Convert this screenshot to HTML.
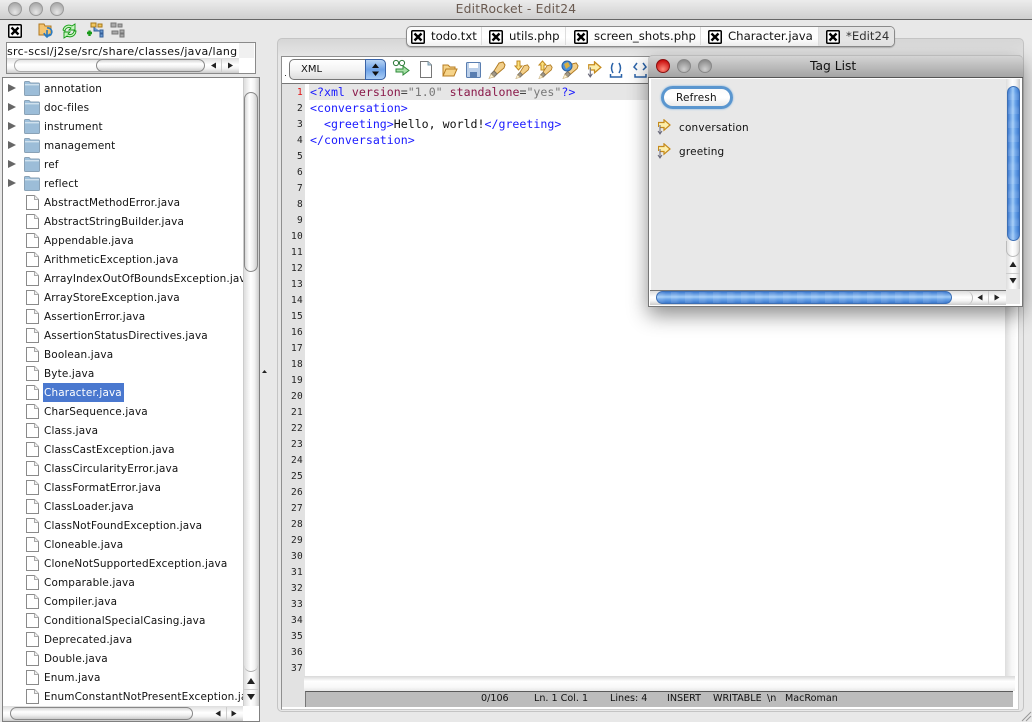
<!DOCTYPE html>
<html><head><meta charset="utf-8">
<style>
html,body{margin:0;padding:0}
body{width:1032px;height:722px;position:relative;overflow:hidden;background:#e8e8e8;font-family:"DejaVu Sans","Liberation Sans",sans-serif;font-size:10.5px;color:#111}
div,span,svg{position:absolute;box-sizing:border-box}
.t{white-space:nowrap;line-height:14px;height:14px}
.f{left:44px;font-size:10.45px;letter-spacing:.15px;margin-top:1px}
.n{left:283px;width:20px;text-align:right;font-family:"DejaVu Sans Mono",monospace;font-size:9.5px;line-height:12px;color:#222;letter-spacing:.3px;margin-top:2px}
.c{left:310px;font-family:"DejaVu Sans Mono",monospace;font-size:11.6px;line-height:16px;white-space:pre;color:#1a1aff}
.c b{font-weight:normal;position:static}
.tab{top:29px;font-size:11.7px;white-space:nowrap;line-height:15px;color:#111}
.sep{top:27px;width:1px;height:18px;background:#ddd}
.hthumb{border:1px solid #888;border-radius:8px;background:linear-gradient(#d8d8d8,#fff 35%,#f0f0f0 65%,#ccc)}
.track{background:linear-gradient(#ddd,#fff 45%,#f4f4f4 70%,#ccc)}
.vtrack{background:linear-gradient(90deg,#ddd,#fff 45%,#f4f4f4 70%,#ccc)}
.blueh{border:1px solid #3c6fb5;border-radius:8px;background:repeating-linear-gradient(90deg,rgba(255,255,255,.1) 0 5px,rgba(255,255,255,0) 9px 14px),linear-gradient(#3f7bd0,#a0ccf8 45%,#6ba5ea 65%,#3c78cc)}
.bluev{border:1px solid #3c6fb5;border-radius:8px;background:repeating-linear-gradient(0deg,rgba(255,255,255,.1) 0 5px,rgba(255,255,255,0) 9px 14px),linear-gradient(90deg,#3f7bd0,#a0ccf8 45%,#6ba5ea 65%,#3c78cc)}
</style></head>
<body>
<svg width="0" height="0" style="left:0;top:0">
<defs>
<symbol id="x" viewBox="0 0 14 14"><rect x=".75" y=".75" width="12.5" height="12.5" fill="#fff" stroke="#000" stroke-width="1.5" rx="1"/><path d="M3.500 3.500L10.500 10.500M10.500 3.500L3.500 10.500" stroke="#000" stroke-width="2.4"/></symbol>
<symbol id="folder" viewBox="0 0 16 15"><path d="M.5 3V1.5Q.5 .5 1.5 .5H5L6.5 2H14.5Q15.5 2 15.5 3V13.5Q15.5 14.5 14.5 14.5H1.5Q.5 14.5 .5 13.5Z" fill="#9dc0dc" stroke="#8aa2b6"/><rect x="1" y="3.2" width="14" height="1.2" fill="#dde9f2"/><rect x="1" y="4.4" width="14" height="9.6" fill="#9cbdd8"/></symbol>
<symbol id="file" viewBox="0 0 13 15"><path d="M.5 .5H8.5L12.5 4.5V14.5H.5Z" fill="#fff" stroke="#8a8a8a"/><path d="M8.5 .5V4.5H12.5" fill="#eee" stroke="#aaa"/></symbol>
<symbol id="arrow" viewBox="0 0 14 17"><path d="M1 3.5H7V.8L13 6 7 11.2V8.5H3.5" fill="#fdeeaa" stroke="#c58a1c" stroke-width="1.2"/><path d="M1.5 3.5V8" stroke="#c58a1c" fill="none"/><path d="M3 6V14M1 12L3 15 5 12" stroke="#667" fill="none"/></symbol>
<symbol id="pen" viewBox="0 0 18 18"><path d="M11 2L15 1 17 4 16 7 9 13 6 10Z" fill="#f2cf8a" stroke="#b07a20"/><path d="M6 10L9 13 6 16 3 13Z" fill="#a09888" stroke="#7a7060"/><path d="M3 13L6 16 1 17.500Z" fill="#fff6d8" stroke="#c8b080" stroke-width=".7"/></symbol>
</defs>
</svg>

<!-- title bar -->
<div style="left:0;top:0;width:1032px;height:20px;background:linear-gradient(#ececec,#cfcfcf);border-bottom:1px solid #666"></div>
<svg style="left:0;top:0" width="80" height="20">
<defs><radialGradient id="g" cx=".5" cy=".75" r=".7"><stop offset="0" stop-color="#e6e6e6"/><stop offset="1" stop-color="#a8a8a8"/></radialGradient></defs>
<circle cx="15" cy="9" r="6.5" fill="url(#g)" stroke="#999"/><circle cx="36" cy="9" r="6.5" fill="url(#g)" stroke="#999"/><circle cx="57" cy="9" r="6.5" fill="url(#g)" stroke="#999"/>
</svg>
<div class="t" style="left:400px;width:232px;top:2px;text-align:center;font-size:12.3px;letter-spacing:.2px;line-height:15px;color:#6a5a50">EditRocket - Edit24</div>

<!-- left toolbar -->
<svg style="left:8px;top:24px" width="14" height="14"><use href="#x"/></svg>
<svg style="left:38px;top:22px" width="90" height="18" viewBox="0 0 90 18">
<path d="M1 5V2H6L7 4H13V13H1Z" fill="#f4c470" stroke="#b07820"/><path d="M9 6A4 4 0 1 1 6 11M9 8V14M6 12L9 15 12 12" stroke="#2a7ac0" fill="none" stroke-width="1.6"/>
<path d="M25 8A6 6 0 0 1 34 4L37 2V8H31L33 6A4 4 0 0 0 27 9ZM38 9A6 6 0 0 1 29 14L26 16V10H32L30 12A4 4 0 0 0 36 9Z" fill="#c8f4c0" stroke="#129a12" stroke-width=".9"/>
<path d="M53 1H58V5H53ZM60 2H64V5H60Z" fill="#f0c860" stroke="#a87818"/><path d="M56 5V9H62M62 8H65V11H62ZM62 12H65V15H62Z" fill="#6a9ad0" stroke="#35609a"/><path d="M49 11H54M51.5 8.5V14" stroke="#1a9a1a" stroke-width="2.4"/>
<path d="M73 1H78V5H73ZM80 2H84V5H80ZM82 8H86V11H82ZM82 12H86V15H82ZM74 9H80V12H74Z" fill="#aaa" stroke="#777"/>
</svg>

<!-- path box -->
<div style="left:6px;top:42px;width:250px;height:32px;background:#fff;border:1px solid #8a8a8a"></div>
<div class="t" style="left:7px;top:45px;font-size:11px;letter-spacing:.29px">src-scsl/j2se/src/share/classes/java/lang</div>
<div style="left:239px;top:43px;width:15px;height:15px;background:#f0f0f0"></div>
<div class="track" style="left:7px;top:58px;width:232px;height:15px"></div>
<div style="left:14px;top:59px;width:90px;height:13px;border:1px solid #aaa;border-right:0;border-radius:7px 0 0 7px;background:linear-gradient(#e4e4e4,#fff 40%,#f4f4f4)"></div>
<div class="hthumb" style="left:96px;top:59px;width:109px;height:13px"></div>
<svg style="left:205px;top:58px" width="35" height="15"><path d="M11 4.500L6 7.500 11 10.500ZM23 4.500V10.500L28 7.500Z" fill="#222"/><path d="M16.500 1V14" stroke="#ccc"/></svg>

<!-- file panel -->
<div style="left:2px;top:77px;width:258px;height:645px;background:#fff;border:1px solid #808080"></div>
<div class="vtrack" style="left:243px;top:78px;width:16px;height:628px;border-left:1px solid #ccc"></div>
<div style="left:244px;top:92px;width:14px;height:180px;border:1px solid #888;border-radius:8px;background:linear-gradient(90deg,#d8d8d8,#fff 35%,#f0f0f0 65%,#ccc)"></div>
<div style="left:244px;top:272px;width:14px;height:400px;border-bottom:1px solid #aaa;border-radius:0 0 8px 8px"></div>
<svg style="left:243px;top:672px" width="16" height="36"><path d="M8 6L4 12H12ZM4 22H12L8 28Z" fill="#222"/><path d="M1 17.500H15" stroke="#ccc"/></svg>
<div class="track" style="left:3px;top:706px;width:240px;height:15px"></div>
<div class="hthumb" style="left:10px;top:707px;width:183px;height:13px"></div>
<svg style="left:208px;top:706px" width="35" height="15"><path d="M12.500 4.500L7.500 7.500 12.500 10.500ZM23.500 4.500V10.500L28.500 7.500Z" fill="#222"/><path d="M18.500 1V14" stroke="#ccc"/></svg>

<!-- tree arrows + folders -->
<svg style="left:0;top:0" width="42" height="720">
<path d="M8 84L16 88 8 92ZM8 103L16 107 8 111ZM8 122L16 126 8 130ZM8 141L16 145 8 149ZM8 160L16 164 8 168ZM8 179L16 183 8 187Z" fill="#666"/>
<use href="#folder" x="24" y="81" width="16" height="15"/>
<use href="#folder" x="24" y="100" width="16" height="15"/>
<use href="#folder" x="24" y="119" width="16" height="15"/>
<use href="#folder" x="24" y="138" width="16" height="15"/>
<use href="#folder" x="24" y="157" width="16" height="15"/>
<use href="#folder" x="24" y="176" width="16" height="15"/>
<use href="#file" x="26" y="195" width="13" height="15"/>
<use href="#file" x="26" y="214" width="13" height="15"/>
<use href="#file" x="26" y="233" width="13" height="15"/>
<use href="#file" x="26" y="252" width="13" height="15"/>
<use href="#file" x="26" y="271" width="13" height="15"/>
<use href="#file" x="26" y="290" width="13" height="15"/>
<use href="#file" x="26" y="309" width="13" height="15"/>
<use href="#file" x="26" y="328" width="13" height="15"/>
<use href="#file" x="26" y="347" width="13" height="15"/>
<use href="#file" x="26" y="366" width="13" height="15"/>
<use href="#file" x="26" y="385" width="13" height="15"/>
<use href="#file" x="26" y="404" width="13" height="15"/>
<use href="#file" x="26" y="423" width="13" height="15"/>
<use href="#file" x="26" y="442" width="13" height="15"/>
<use href="#file" x="26" y="461" width="13" height="15"/>
<use href="#file" x="26" y="480" width="13" height="15"/>
<use href="#file" x="26" y="499" width="13" height="15"/>
<use href="#file" x="26" y="518" width="13" height="15"/>
<use href="#file" x="26" y="537" width="13" height="15"/>
<use href="#file" x="26" y="556" width="13" height="15"/>
<use href="#file" x="26" y="575" width="13" height="15"/>
<use href="#file" x="26" y="594" width="13" height="15"/>
<use href="#file" x="26" y="613" width="13" height="15"/>
<use href="#file" x="26" y="632" width="13" height="15"/>
<use href="#file" x="26" y="651" width="13" height="15"/>
<use href="#file" x="26" y="670" width="13" height="15"/>
<use href="#file" x="26" y="689" width="13" height="15"/>
</svg>

<div style="left:43px;top:383px;width:81px;height:19px;background:#4a78cf"></div>
<div class="t f" style="top:81px">annotation</div>
<div class="t f" style="top:100px">doc-files</div>
<div class="t f" style="top:119px">instrument</div>
<div class="t f" style="top:138px">management</div>
<div class="t f" style="top:157px">ref</div>
<div class="t f" style="top:176px">reflect</div>
<div class="t f" style="top:195px">AbstractMethodError.java</div>
<div class="t f" style="top:214px">AbstractStringBuilder.java</div>
<div class="t f" style="top:233px">Appendable.java</div>
<div class="t f" style="top:252px">ArithmeticException.java</div>
<div class="t f" style="top:271px;width:199px;overflow:hidden">ArrayIndexOutOfBoundsException.java</div>
<div class="t f" style="top:290px">ArrayStoreException.java</div>
<div class="t f" style="top:309px">AssertionError.java</div>
<div class="t f" style="top:328px">AssertionStatusDirectives.java</div>
<div class="t f" style="top:347px">Boolean.java</div>
<div class="t f" style="top:366px">Byte.java</div>
<div class="t f" style="top:385px;color:#fff">Character.java</div>
<div class="t f" style="top:404px">CharSequence.java</div>
<div class="t f" style="top:423px">Class.java</div>
<div class="t f" style="top:442px">ClassCastException.java</div>
<div class="t f" style="top:461px">ClassCircularityError.java</div>
<div class="t f" style="top:480px">ClassFormatError.java</div>
<div class="t f" style="top:499px">ClassLoader.java</div>
<div class="t f" style="top:518px">ClassNotFoundException.java</div>
<div class="t f" style="top:537px">Cloneable.java</div>
<div class="t f" style="top:556px">CloneNotSupportedException.java</div>
<div class="t f" style="top:575px">Comparable.java</div>
<div class="t f" style="top:594px">Compiler.java</div>
<div class="t f" style="top:613px">ConditionalSpecialCasing.java</div>
<div class="t f" style="top:632px">Deprecated.java</div>
<div class="t f" style="top:651px">Double.java</div>
<div class="t f" style="top:670px">Enum.java</div>
<div class="t f" style="top:689px;width:199px;overflow:hidden">EnumConstantNotPresentException.java</div>

<!-- divider grip -->
<svg style="left:261px;top:368px" width="8" height="8"><path d="M1 5L3.5 2 6 5Z" fill="#222"/></svg>

<!-- main panel -->
<div style="left:277px;top:38px;width:747px;height:674px;border:1px solid #c4c4c4;border-radius:5px;background:linear-gradient(#d6d6d6,#e6e6e6 18px,#e8e8e8)"></div>
<div style="left:281px;top:56px;width:738px;height:654px;background:#fff;border:1px solid #8f8f8f;border-bottom-color:#ccc;border-right-color:#ccc"></div>
<div style="left:282px;top:83px;width:737px;height:1px;background:#777"></div>
<div style="left:282px;top:84px;width:23px;height:623px;background:#e2e2e2"></div>
<div style="left:1005px;top:84px;width:13px;height:592px;background:linear-gradient(90deg,#ddd,#f6f6f6 50%,#fff)"></div>
<div style="left:304px;top:676px;width:711px;height:15px;background:linear-gradient(#d8d8d8,#fff 35%,#f8f8f8 75%,#e8e8e8)"></div>
<div style="left:305px;top:691px;width:708px;height:16px;background:#bcbcbc;border-top:1px solid #5a5a5a;border-left:1px solid #777"></div>
<div class="t" style="left:481px;top:692px;font-size:9.6px;color:#111;white-space:pre">0/106</div>
<div class="t" style="left:534px;top:692px;font-size:9.6px">Ln. 1 Col. 1</div>
<div class="t" style="left:610px;top:692px;font-size:9.6px">Lines: 4</div>
<div class="t" style="left:667px;top:692px;font-size:9.6px">INSERT</div>
<div class="t" style="left:713px;top:692px;font-size:9.6px">WRITABLE</div>
<div class="t" style="left:767px;top:692px;font-size:9.6px">\n</div>
<div class="t" style="left:785px;top:692px;font-size:9.6px">MacRoman</div>
<svg style="left:1020px;top:710px" width="12" height="12"><path d="M2 11L11 2M6 11L11 6" stroke="#999"/></svg>

<!-- tabs -->
<div style="left:406px;top:26px;width:489px;height:21px;background:linear-gradient(#fafafa,#fff 55%,#f0f0f0);border:1px solid #8a8a8a;border-radius:5px;box-shadow:0 1px 1px rgba(0,0,0,.2)"></div>
<div style="left:818px;top:27px;width:76px;height:19px;background:#e4e4e4;border-radius:0 4px 4px 0"></div>
<div class="sep" style="left:481px"></div><div class="sep" style="left:565px"></div><div class="sep" style="left:700px"></div><div class="sep" style="left:818px"></div>
<svg style="left:411px;top:30px" width="14" height="14"><use href="#x"/></svg>
<svg style="left:489px;top:30px" width="14" height="14"><use href="#x"/></svg>
<svg style="left:574px;top:30px" width="14" height="14"><use href="#x"/></svg>
<svg style="left:708px;top:30px" width="14" height="14"><use href="#x"/></svg>
<svg style="left:826px;top:30px" width="14" height="14"><use href="#x"/></svg>
<div class="tab" style="left:431px">todo.txt</div>
<div class="tab" style="left:509px">utils.php</div>
<div class="tab" style="left:594px">screen_shots.php</div>
<div class="tab" style="left:728px">Character.java</div>
<div class="tab" style="left:846px;color:#333">*Edit24</div>

<!-- XML combo -->
<div style="left:289px;top:59px;width:97px;height:21px;border:1px solid #777;border-radius:5px;background:linear-gradient(#fff,#f4f4f4 50%,#ddd)"></div>
<div style="left:365px;top:59px;width:21px;height:21px;border:1px solid #3a64a8;border-radius:0 5px 5px 0;background:linear-gradient(#b8d4f4,#6ea2e6 50%,#a8ccf6)"></div>
<svg style="left:365px;top:59px" width="21" height="21"><path d="M7 9L10.5 4.500 14 9ZM7 12.500H14L10.500 17Z" fill="#111"/></svg>
<div class="t" style="left:301px;top:63px;font-size:10px">XML</div>
<div style="left:285px;top:75px;width:1px;height:1px;background:#333"></div>

<!-- editor toolbar -->
<svg style="left:392px;top:58px" width="258" height="24" viewBox="0 0 258 24">
<g fill="none" stroke="#2f7a3a"><circle cx="4" cy="5" r="2.600"/><circle cx="10" cy="5" r="2.600"/></g><path d="M4 11H11V8L17 12.500 11 17V14H4Z" fill="#a8e0a8" stroke="#2f8a3a"/>
<path d="M28.500 3.500H36L39.500 7V19.500H28.500Z" fill="#fff" stroke="#777"/><path d="M36 3.500V7H39.500" fill="#bcd" stroke="#79a"/>
<path d="M51 18V7H56L58 9H63V11H54L51 18H62L65 11H54" fill="#f6d48a" stroke="#b77c22"/>
<rect x="74.500" y="4.500" width="14" height="15" rx="1" fill="#bcd0ea" stroke="#5a7eb0"/><rect x="77" y="5" width="9" height="5" fill="#fff"/><rect x="78" y="14" width="7" height="5" fill="#5a7eb0"/>
<use href="#pen" x="96" y="3" width="18" height="18"/>
<use href="#pen" x="123" y="6" width="15" height="15"/><path d="M125 3H128V8H130L126.500 12 123 8H125Z" fill="#fbe07c" stroke="#c08a20"/>
<use href="#pen" x="146" y="6" width="15" height="15"/><path d="M149 12H152V7H154L150.500 3 147 7H149Z" fill="#fbe07c" stroke="#c08a20"/>
<use href="#pen" x="170" y="4" width="17" height="17"/><circle cx="175" cy="8" r="5" fill="#4a90d8" stroke="#2a60a0"/><path d="M172 6L176 4 178 8 174 11Z" fill="#d8b040"/>
<use href="#arrow" x="195" y="3" width="15" height="18"/>
<path d="M221 5Q218 10 221 15M227 5Q230 10 227 15M218.500 16V19H229.500V16" fill="none" stroke="#2a62a8" stroke-width="1.500"/>
<path d="M245 5L242 9 245 12M251 5L254 9 251 12M243 16V19H254V16" fill="none" stroke="#2a62a8" stroke-width="1.500"/>
</svg>

<!-- line numbers -->
<div class="n" style="top:85px;color:#e01010">1</div><div class="n" style="top:101px">2</div><div class="n" style="top:117px">3</div><div class="n" style="top:133px">4</div><div class="n" style="top:149px">5</div><div class="n" style="top:165px">6</div><div class="n" style="top:181px">7</div><div class="n" style="top:197px">8</div><div class="n" style="top:213px">9</div><div class="n" style="top:229px">10</div><div class="n" style="top:245px">11</div><div class="n" style="top:261px">12</div><div class="n" style="top:277px">13</div><div class="n" style="top:293px">14</div><div class="n" style="top:309px">15</div><div class="n" style="top:325px">16</div><div class="n" style="top:341px">17</div><div class="n" style="top:357px">18</div><div class="n" style="top:373px">19</div><div class="n" style="top:389px">20</div><div class="n" style="top:405px">21</div><div class="n" style="top:421px">22</div><div class="n" style="top:437px">23</div><div class="n" style="top:453px">24</div><div class="n" style="top:469px">25</div><div class="n" style="top:485px">26</div><div class="n" style="top:501px">27</div><div class="n" style="top:517px">28</div><div class="n" style="top:533px">29</div><div class="n" style="top:549px">30</div><div class="n" style="top:565px">31</div><div class="n" style="top:581px">32</div><div class="n" style="top:597px">33</div><div class="n" style="top:613px">34</div><div class="n" style="top:629px">35</div><div class="n" style="top:645px">36</div><div class="n" style="top:661px">37</div>

<!-- code -->
<div style="left:309px;top:84px;width:700px;height:16px;background:#e6e6e6"></div>
<div class="c" style="top:84px">&lt;?xml <b style="color:#8a1a4a">version</b><b style="color:#444">=</b><b style="color:#777">"1.0"</b> <b style="color:#8a1a4a">standalone</b><b style="color:#444">=</b><b style="color:#777">"yes"</b>?&gt;</div>
<div class="c" style="top:100px">&lt;conversation&gt;</div>
<div class="c" style="top:116px">  &lt;greeting&gt;<b style="color:#111">Hello, world!</b>&lt;/greeting&gt;</div>
<div class="c" style="top:132px">&lt;/conversation&gt;</div>

<!-- Tag List window -->
<div style="left:648px;top:55px;width:375px;height:252px;background:#e8e8e8;border:1px solid #777;border-top:0;border-radius:5px 5px 0 0;box-shadow:0 8px 20px rgba(0,0,0,.45)"></div>
<div style="left:648px;top:55px;width:375px;height:23px;background:linear-gradient(#d4d4d4,#a4a4a4);border-radius:5px 5px 0 0;border-bottom:1px solid #555;border-top:1px solid #bbb"></div>
<svg style="left:650px;top:56px" width="70" height="20">
<defs><radialGradient id="r" cx=".5" cy=".75" r=".7"><stop offset="0" stop-color="#ff8a7a"/><stop offset="1" stop-color="#c80a0a"/></radialGradient><radialGradient id="g2" cx=".5" cy=".75" r=".7"><stop offset="0" stop-color="#cfcfcf"/><stop offset="1" stop-color="#8a8a8a"/></radialGradient></defs>
<circle cx="13" cy="10" r="6.500" fill="url(#r)" stroke="#8a1010"/><circle cx="34" cy="10" r="6.500" fill="url(#g2)" stroke="#888"/><circle cx="55" cy="10" r="6.500" fill="url(#g2)" stroke="#888"/>
</svg>
<div class="t" style="left:810px;top:59px;font-size:12.300px;line-height:15px;color:#111">Tag List</div>
<div style="left:649px;top:78px;width:373px;height:228px;border:2px solid #fff;border-top:1px solid #fff;background:#e8e8e8"></div>

<div style="left:661px;top:86px;width:72px;height:23px;border:3px solid #5a96cf;border-radius:12px;background:linear-gradient(#fafafa,#fff 50%,#eaeaea);box-shadow:0 0 2px #7ab0e0"></div>
<div class="t" style="left:676px;top:91px;font-size:10.450px;letter-spacing:.2px">Refresh</div>
<svg style="left:657px;top:119px" width="14" height="17"><use href="#arrow"/></svg>
<svg style="left:657px;top:143px" width="14" height="17"><use href="#arrow"/></svg>
<div class="t" style="left:679px;top:121px;font-size:10.450px;letter-spacing:.2px">conversation</div>
<div class="t" style="left:679px;top:145px;font-size:10.450px;letter-spacing:.2px">greeting</div>

<div class="vtrack" style="left:1006px;top:79px;width:14px;height:210px"></div>
<div style="left:1006px;top:241px;width:14px;height:16px;border:1px solid #bbb;border-top:0;border-radius:0 0 8px 8px"></div>
<div class="bluev" style="left:1007px;top:86px;width:13px;height:155px"></div>
<svg style="left:1006px;top:258px" width="14" height="32"><path d="M7 3.500L3.500 9H10.500ZM3.500 20H10.500L7 25.500Z" fill="#222"/><path d="M0 15.500H14" stroke="#ccc"/></svg>
<div class="track" style="left:650px;top:290px;width:356px;height:15px;border-top:1px solid #777"></div>
<div style="left:945px;top:291px;width:28px;height:14px;border-right:1px solid #bbb;border-radius:0 8px 8px 0"></div>
<div class="blueh" style="left:656px;top:291px;width:296px;height:13px"></div>
<svg style="left:970px;top:290px" width="36" height="15"><path d="M12.500 4.500L7.500 7.500 12.500 10.500ZM24.500 4.500V10.500L29.500 7.500Z" fill="#222"/><path d="M18.500 1V14" stroke="#ccc"/></svg>
<div style="left:877px;top:305px;width:145px;height:1px;background:#fff"></div>
</body></html>
